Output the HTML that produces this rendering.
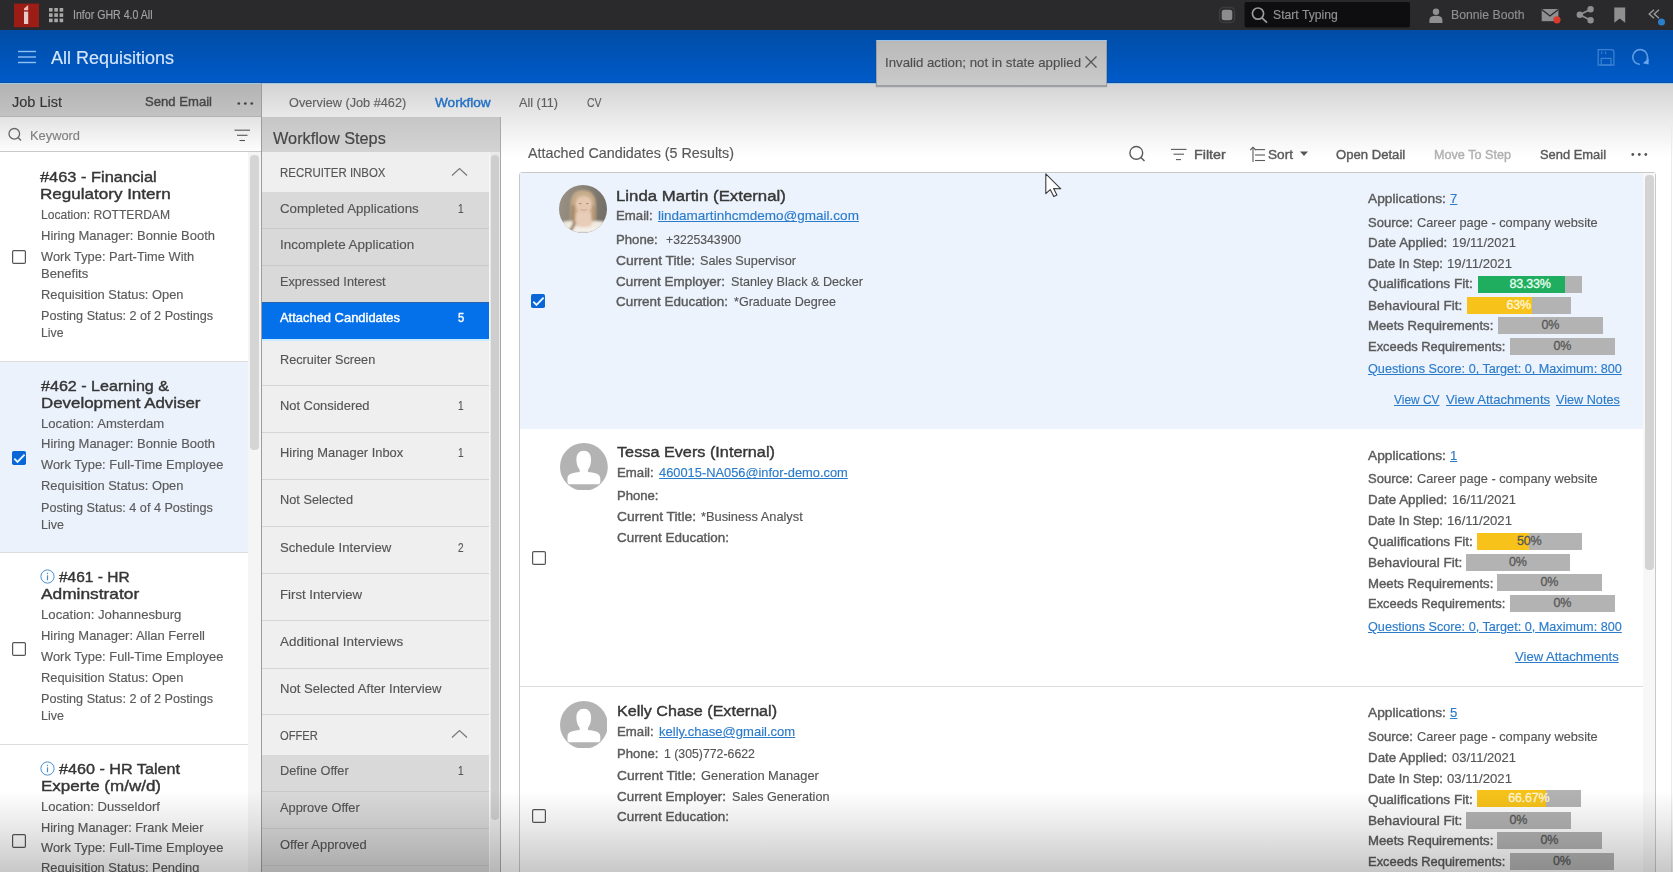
<!DOCTYPE html><html><head><meta charset="utf-8"><style>
html,body{margin:0;padding:0;width:1673px;height:872px;overflow:hidden;background:#fff}
body{position:relative;font-family:"Liberation Sans",sans-serif}
.t{position:absolute;white-space:nowrap;transform-origin:0 0}
</style></head><body>
<div style="position:absolute;left:0px;top:0px;width:1673px;height:30px;background:#2a2a2c"></div>
<div style="position:absolute;left:0px;top:30px;width:1673px;height:53px;background:linear-gradient(#004ca6,#005bc9)"></div>
<div style="position:absolute;left:0px;top:81.6px;width:1673px;height:1px;background:#0b4f9e"></div>
<div style="position:absolute;left:0px;top:82.6px;width:1673px;height:1.4px;background:#9fc8ee"></div>
<div style="position:absolute;left:0px;top:84px;width:261px;height:33px;background:linear-gradient(#b3b3b3,#c3c3c3)"></div>
<div style="position:absolute;left:0px;top:115.6px;width:261px;height:1.8px;background:#b2b2b2"></div>
<div style="position:absolute;left:0px;top:117px;width:261px;height:35px;background:linear-gradient(#e2e2e2,#fefefe)"></div>
<div style="position:absolute;left:0px;top:151px;width:261px;height:1px;background:#c9c9c9"></div>
<div style="position:absolute;left:0px;top:152px;width:248px;height:720px;background:#fff"></div>
<div style="position:absolute;left:248px;top:152px;width:13px;height:720px;background:#f5f5f5"></div>
<div style="position:absolute;left:250px;top:155px;width:9px;height:295px;background:#d5d5d5;border-radius:4px"></div>
<div style="position:absolute;left:260.8px;top:83px;width:1.2px;height:789px;background:#9c9c9c"></div>
<div style="position:absolute;left:262px;top:84px;width:1411px;height:33px;background:linear-gradient(#d3d3d3,#e9e9e9)"></div>
<div style="position:absolute;left:262px;top:116.6px;width:1411px;height:1.2px;background:#bdbdbd"></div>
<div style="position:absolute;left:262px;top:117px;width:238px;height:35px;background:linear-gradient(#c6c6c6,#d3d3d3)"></div>
<div style="position:absolute;left:262px;top:152px;width:228px;height:720px;background:#efefef"></div>
<div style="position:absolute;left:490px;top:152px;width:10px;height:720px;background:#e9e9e9"></div>
<div style="position:absolute;left:491px;top:155px;width:8px;height:665px;background:#cecece;border-radius:4px"></div>
<div style="position:absolute;left:500px;top:117px;width:1px;height:755px;background:#a9a9a9"></div>
<div style="position:absolute;left:501px;top:117px;width:1172px;height:755px;background:linear-gradient(#e9e9e9 0px,#ffffff 40px)"></div>
<svg style="position:absolute;left:0;top:0" width="1673" height="30">
<rect x="14" y="3.6" width="25" height="23.6" fill="#9c1c16"/>
<path d="M24 10.2 L24 8.6 L28.2 5 L28.2 10.2 Z" fill="#e9bdb6"/>
<rect x="24" y="11.6" width="4.2" height="12.4" fill="#e8cac6"/>
<g fill="#a9a9a9">
<rect x="49" y="8" width="3.6" height="3.6"/><rect x="54.3" y="8" width="3.6" height="3.6"/><rect x="59.6" y="8" width="3.6" height="3.6"/>
<rect x="49" y="13.3" width="3.6" height="3.6"/><rect x="54.3" y="13.3" width="3.6" height="3.6"/><rect x="59.6" y="13.3" width="3.6" height="3.6"/>
<rect x="49" y="18.6" width="3.6" height="3.6"/><rect x="54.3" y="18.6" width="3.6" height="3.6"/><rect x="59.6" y="18.6" width="3.6" height="3.6"/>
</g>
<rect x="1219.5" y="7.5" width="15" height="15" rx="4" fill="none" stroke="#3c3c3e" stroke-width="1.5"/>
<rect x="1221.7" y="9.7" width="10.6" height="10.6" rx="2.5" fill="#8c8c8c"/>
<rect x="1244.5" y="2" width="165.5" height="25.5" rx="2" fill="#0e0e10"/>
<circle cx="1258" cy="13.6" r="5.6" fill="none" stroke="#9a9a9a" stroke-width="1.7"/>
<line x1="1262" y1="17.8" x2="1267" y2="22.6" stroke="#9a9a9a" stroke-width="1.8"/>
<circle cx="1436" cy="11.8" r="3.2" fill="#8f8f8f"/>
<path d="M1429.4 23 L1429.4 20 Q1429.4 15.8 1436 15.8 Q1442.4 15.8 1442.4 20 L1442.4 23 Z" fill="#8f8f8f"/>
<rect x="1541.7" y="9" width="16.7" height="12.2" fill="#8f8f8f"/>
<path d="M1541.7 9.5 L1550 16 L1558.4 9.5" fill="none" stroke="#2a2a2c" stroke-width="1.3"/>
<circle cx="1557" cy="19.8" r="3.6" fill="#d83a2e"/>
<g fill="#8f8f8f" stroke="#8f8f8f" stroke-width="1.6">
<circle cx="1579.8" cy="14.8" r="2.4"/><circle cx="1590.6" cy="9.3" r="2.4"/><circle cx="1590.6" cy="20.3" r="2.4"/>
<line x1="1579.8" y1="14.8" x2="1590.6" y2="9.3"/><line x1="1579.8" y1="14.8" x2="1590.6" y2="20.3"/>
</g>
<path d="M1614.3 7.6 H1625.2 V22.7 L1619.75 18.6 L1614.3 22.7 Z" fill="#8f8f8f"/>
<path d="M1654 9.8 L1649.2 14 L1654 18.2 M1659 9.8 L1654.2 14 L1659 18.2" fill="none" stroke="#9a9a9a" stroke-width="1.4"/>
<circle cx="1661.5" cy="22" r="3.5" fill="#2a7fc8"/>
</svg>
<div class="t" style="left:72.50px;top:7.54px;font-size:12px;line-height:15px;color:#a3a3a3;-webkit-text-stroke:0.15px #a3a3a3;transform:scaleX(0.8830);">Infor GHR 4.0 All</div>
<div class="t" style="left:1273.30px;top:7.30px;font-size:13px;line-height:16px;color:#929292;-webkit-text-stroke:0.15px #929292;transform:scaleX(0.9373);">Start Typing</div>
<div class="t" style="left:1450.80px;top:7.00px;font-size:13px;line-height:16px;color:#8f8f8f;-webkit-text-stroke:0.15px #8f8f8f;transform:scaleX(0.9415);">Bonnie Booth</div>
<svg style="position:absolute;left:0;top:30" width="1673" height="53">
<g stroke="#8ec0f5" stroke-width="1.4"><line x1="18" y1="21.5" x2="36" y2="21.5"/><line x1="18" y1="27" x2="36" y2="27"/><line x1="18" y1="32.5" x2="36" y2="32.5"/></g>
<path d="M1598.2 19.6 H1611.3 Q1613.9 19.6 1613.9 22.2 V35 H1598.2 Z" fill="none" stroke="#3a80d4" stroke-width="1.3"/>
<rect x="1601.2" y="28.4" width="9.8" height="6.6" fill="none" stroke="#3a80d4" stroke-width="1.2"/>
<line x1="1601.8" y1="21.5" x2="1601.8" y2="24" stroke="#3a80d4" stroke-width="1.1"/><line x1="1605.6" y1="21.5" x2="1605.6" y2="24" stroke="#3a80d4" stroke-width="1.1"/>
<path d="M1639.8 34.4 A7.4 7.4 0 1 1 1647 29.8" fill="none" stroke="#5d9de6" stroke-width="1.6"/>
<path d="M1648.8 28.2 L1648.6 34.4 L1642.8 33.2 Z" fill="#6aa8ee"/>
</svg>
<div class="t" style="left:51.00px;top:47.36px;font-size:18px;line-height:22px;color:#d5e6fb;-webkit-text-stroke:0.15px #d5e6fb;transform:scaleX(0.9995);">All Requisitions</div>
<div style="position:absolute;left:875.5px;top:39.5px;width:231.5px;height:46.5px;background:linear-gradient(#b9b9b9,#cacaca);border:1px solid #9aa0a6;border-top-color:#9cc4ea;box-sizing:border-box;box-shadow:0 1px 1px rgba(0,0,0,.25)"></div>
<div class="t" style="left:885.30px;top:53.72px;font-size:13.5px;line-height:17px;color:#4e4e4e;-webkit-text-stroke:0.15px #4e4e4e;transform:scaleX(0.9818);">Invalid action; not in state applied</div>
<svg style="position:absolute;left:1084px;top:55px" width="14" height="14"><path d="M1.5 1.5 L12.5 12.5 M12.5 1.5 L1.5 12.5" stroke="#555" stroke-width="1.3"/></svg>
<div class="t" style="left:12.00px;top:93.35px;font-size:14px;line-height:18px;color:#353535;-webkit-text-stroke:0.15px #353535;transform:scaleX(1.0363);">Job List</div>
<div class="t" style="left:145.00px;top:94.40px;font-size:13px;line-height:16px;color:#474747;-webkit-text-stroke:0.4px #474747;transform:scaleX(1.0078);">Send Email</div>
<svg style="position:absolute;left:236px;top:100px" width="20" height="8"><circle cx="2.8" cy="3.5" r="1.35" fill="#444"/><circle cx="9.3" cy="3.5" r="1.35" fill="#444"/><circle cx="15.8" cy="3.5" r="1.35" fill="#444"/></svg>
<svg style="position:absolute;left:0;top:117px" width="261" height="35">
<circle cx="14.3" cy="16.8" r="5.3" fill="none" stroke="#666" stroke-width="1.3"/>
<line x1="18.2" y1="20.7" x2="21" y2="23.5" stroke="#666" stroke-width="1.4"/>
<g stroke="#555" stroke-width="1.1"><line x1="234.5" y1="13.2" x2="250" y2="13.2"/><line x1="237" y1="18.3" x2="247.5" y2="18.3"/><line x1="239.5" y1="23.5" x2="245" y2="23.5"/></g>
</svg>
<div class="t" style="left:30.00px;top:127.42px;font-size:13.5px;line-height:17px;color:#808080;-webkit-text-stroke:0.15px #808080;transform:scaleX(0.9519);">Keyword</div>
<div class="t" style="left:288.80px;top:95.10px;font-size:13px;line-height:16px;color:#606060;-webkit-text-stroke:0.15px #606060;transform:scaleX(0.9771);">Overview (Job #462)</div>
<div class="t" style="left:435.00px;top:95.10px;font-size:13px;line-height:16px;color:#2070c4;-webkit-text-stroke:0.4px #2070c4;transform:scaleX(1.0467);">Workflow</div>
<div class="t" style="left:519.00px;top:95.10px;font-size:13px;line-height:16px;color:#606060;-webkit-text-stroke:0.15px #606060;transform:scaleX(0.9698);">All (11)</div>
<div class="t" style="left:587.00px;top:95.10px;font-size:13px;line-height:16px;color:#606060;-webkit-text-stroke:0.15px #606060;transform:scaleX(0.8084);">CV</div>
<div class="t" style="left:273.00px;top:128.76px;font-size:16px;line-height:20px;color:#454545;-webkit-text-stroke:0.15px #454545;transform:scaleX(1.0176);">Workflow Steps</div>
<div style="position:absolute;left:262px;top:152px;width:226.5px;height:40px;background:#efefef"></div>
<div style="position:absolute;left:488.5px;top:152px;width:1.5px;height:40px;background:#f6f6f6"></div>
<div class="t" style="left:280.30px;top:165.27px;font-size:12.5px;line-height:16px;color:#555555;-webkit-text-stroke:0.15px #555555;transform:scaleX(0.9151);">RECRUITER INBOX</div>
<svg style="position:absolute;left:450px;top:166.5px" width="20" height="12"><path d="M2 8.5 L9.5 1.5 L17 8.5" fill="none" stroke="#777" stroke-width="1.2"/></svg>
<div style="position:absolute;left:262px;top:191.7px;width:226.5px;height:36.7px;background:#d9d9d9"></div>
<div style="position:absolute;left:488.5px;top:191.7px;width:1.5px;height:36.7px;background:#f6f6f6"></div>
<div class="t" style="left:280.30px;top:200.50px;font-size:13px;line-height:16px;color:#555555;-webkit-text-stroke:0.15px #555555;transform:scaleX(1.0209);">Completed Applications</div>
<div class="t" style="left:458.00px;top:200.50px;font-size:13px;line-height:16px;color:#555555;-webkit-text-stroke:0.15px #555555;transform:scaleX(0.7745);">1</div>
<div style="position:absolute;left:262px;top:228.4px;width:226.5px;height:36.6px;background:#d9d9d9"></div>
<div style="position:absolute;left:488.5px;top:228.4px;width:1.5px;height:36.6px;background:#f6f6f6"></div>
<div class="t" style="left:280.30px;top:237.10px;font-size:13px;line-height:16px;color:#555555;-webkit-text-stroke:0.15px #555555;transform:scaleX(1.0316);">Incomplete Application</div>
<div style="position:absolute;left:262px;top:265px;width:226.5px;height:37px;background:#d9d9d9"></div>
<div style="position:absolute;left:488.5px;top:265px;width:1.5px;height:37px;background:#f6f6f6"></div>
<div class="t" style="left:280.30px;top:273.90px;font-size:13px;line-height:16px;color:#555555;-webkit-text-stroke:0.15px #555555;transform:scaleX(0.9743);">Expressed Interest</div>
<div style="position:absolute;left:262px;top:302px;width:226.5px;height:36.5px;background:#0470ea"></div>
<div style="position:absolute;left:488.5px;top:302px;width:1.5px;height:36.5px;background:#f6f6f6"></div>
<div class="t" style="left:280.00px;top:310.10px;font-size:13px;line-height:16px;color:#ffffff;-webkit-text-stroke:0.4px #ffffff;transform:scaleX(0.9942);">Attached Candidates</div>
<div class="t" style="left:458.30px;top:310.10px;font-size:13px;line-height:16px;color:#ffffff;-webkit-text-stroke:0.4px #ffffff;transform:scaleX(0.8575);">5</div>
<div style="position:absolute;left:262px;top:338.5px;width:226.5px;height:2px;background:#c8ecfd"></div>
<div style="position:absolute;left:262px;top:302px;width:226.5px;height:1px;background:#2a63b0"></div>
<div style="position:absolute;left:262px;top:340.5px;width:226.5px;height:45px;background:#efefef"></div>
<div style="position:absolute;left:488.5px;top:340.5px;width:1.5px;height:45px;background:#f6f6f6"></div>
<div class="t" style="left:280.30px;top:351.80px;font-size:13px;line-height:16px;color:#555555;-webkit-text-stroke:0.15px #555555;transform:scaleX(0.9760);">Recruiter Screen</div>
<div style="position:absolute;left:262px;top:385.5px;width:226.5px;height:47px;background:#efefef"></div>
<div style="position:absolute;left:488.5px;top:385.5px;width:1.5px;height:47px;background:#f6f6f6"></div>
<div class="t" style="left:280.30px;top:398.30px;font-size:13px;line-height:16px;color:#555555;-webkit-text-stroke:0.15px #555555;transform:scaleX(0.9908);">Not Considered</div>
<div class="t" style="left:458.00px;top:398.30px;font-size:13px;line-height:16px;color:#555555;-webkit-text-stroke:0.15px #555555;transform:scaleX(0.7745);">1</div>
<div style="position:absolute;left:262px;top:432.5px;width:226.5px;height:47px;background:#efefef"></div>
<div style="position:absolute;left:488.5px;top:432.5px;width:1.5px;height:47px;background:#f6f6f6"></div>
<div class="t" style="left:280.30px;top:445.10px;font-size:13px;line-height:16px;color:#555555;-webkit-text-stroke:0.15px #555555;transform:scaleX(0.9912);">Hiring Manager Inbox</div>
<div class="t" style="left:458.00px;top:445.10px;font-size:13px;line-height:16px;color:#555555;-webkit-text-stroke:0.15px #555555;transform:scaleX(0.7745);">1</div>
<div style="position:absolute;left:262px;top:479.5px;width:226.5px;height:47px;background:#efefef"></div>
<div style="position:absolute;left:488.5px;top:479.5px;width:1.5px;height:47px;background:#f6f6f6"></div>
<div class="t" style="left:280.30px;top:492.40px;font-size:13px;line-height:16px;color:#555555;-webkit-text-stroke:0.15px #555555;transform:scaleX(0.9807);">Not Selected</div>
<div style="position:absolute;left:262px;top:526.5px;width:226.5px;height:47.2px;background:#efefef"></div>
<div style="position:absolute;left:488.5px;top:526.5px;width:1.5px;height:47.2px;background:#f6f6f6"></div>
<div class="t" style="left:280.30px;top:539.90px;font-size:13px;line-height:16px;color:#555555;-webkit-text-stroke:0.15px #555555;transform:scaleX(1.0124);">Schedule Interview</div>
<div class="t" style="left:458.00px;top:539.90px;font-size:13px;line-height:16px;color:#555555;-webkit-text-stroke:0.15px #555555;transform:scaleX(0.7745);">2</div>
<div style="position:absolute;left:262px;top:573.7px;width:226.5px;height:47.1px;background:#efefef"></div>
<div style="position:absolute;left:488.5px;top:573.7px;width:1.5px;height:47.1px;background:#f6f6f6"></div>
<div class="t" style="left:280.30px;top:586.60px;font-size:13px;line-height:16px;color:#555555;-webkit-text-stroke:0.15px #555555;transform:scaleX(1.0148);">First Interview</div>
<div style="position:absolute;left:262px;top:620.8px;width:226.5px;height:47.2px;background:#efefef"></div>
<div style="position:absolute;left:488.5px;top:620.8px;width:1.5px;height:47.2px;background:#f6f6f6"></div>
<div class="t" style="left:280.30px;top:633.70px;font-size:13px;line-height:16px;color:#555555;-webkit-text-stroke:0.15px #555555;transform:scaleX(1.0333);">Additional Interviews</div>
<div style="position:absolute;left:262px;top:668px;width:226.5px;height:46.4px;background:#efefef"></div>
<div style="position:absolute;left:488.5px;top:668px;width:1.5px;height:46.4px;background:#f6f6f6"></div>
<div class="t" style="left:280.30px;top:680.60px;font-size:13px;line-height:16px;color:#555555;-webkit-text-stroke:0.15px #555555;transform:scaleX(1.0061);">Not Selected After Interview</div>
<div style="position:absolute;left:262px;top:714.4px;width:226.5px;height:40.6px;background:#efefef"></div>
<div style="position:absolute;left:488.5px;top:714.4px;width:1.5px;height:40.6px;background:#f6f6f6"></div>
<div class="t" style="left:280.30px;top:727.87px;font-size:12.5px;line-height:16px;color:#555555;-webkit-text-stroke:0.15px #555555;transform:scaleX(0.8947);">OFFER</div>
<svg style="position:absolute;left:450px;top:729.1px" width="20" height="12"><path d="M2 8.5 L9.5 1.5 L17 8.5" fill="none" stroke="#777" stroke-width="1.2"/></svg>
<div style="position:absolute;left:262px;top:755px;width:226.5px;height:36.3px;background:#d9d9d9"></div>
<div style="position:absolute;left:488.5px;top:755px;width:1.5px;height:36.3px;background:#f6f6f6"></div>
<div class="t" style="left:280.30px;top:763.30px;font-size:13px;line-height:16px;color:#555555;-webkit-text-stroke:0.15px #555555;transform:scaleX(0.9835);">Define Offer</div>
<div class="t" style="left:458.00px;top:763.30px;font-size:13px;line-height:16px;color:#555555;-webkit-text-stroke:0.15px #555555;transform:scaleX(0.7745);">1</div>
<div style="position:absolute;left:262px;top:791.3px;width:226.5px;height:36.7px;background:#d9d9d9"></div>
<div style="position:absolute;left:488.5px;top:791.3px;width:1.5px;height:36.7px;background:#f6f6f6"></div>
<div class="t" style="left:280.30px;top:800.10px;font-size:13px;line-height:16px;color:#555555;-webkit-text-stroke:0.15px #555555;transform:scaleX(0.9877);">Approve Offer</div>
<div style="position:absolute;left:262px;top:828px;width:226.5px;height:37px;background:#d9d9d9"></div>
<div style="position:absolute;left:488.5px;top:828px;width:1.5px;height:37px;background:#f6f6f6"></div>
<div class="t" style="left:280.30px;top:837.10px;font-size:13px;line-height:16px;color:#555555;-webkit-text-stroke:0.15px #555555;transform:scaleX(0.9942);">Offer Approved</div>
<div style="position:absolute;left:262px;top:865px;width:226.5px;height:36px;background:#d9d9d9"></div>
<div style="position:absolute;left:488.5px;top:865px;width:1.5px;height:36px;background:#f6f6f6"></div>
<div class="t" style="left:280.30px;top:874.10px;font-size:13px;line-height:16px;color:#555555;-webkit-text-stroke:0.15px #555555;transform:scaleX(1.0000);"></div>
<div style="position:absolute;left:262px;top:227.99999999999997px;width:226.5px;height:1px;background:#c9c9c9"></div>
<div style="position:absolute;left:262px;top:264.6px;width:226.5px;height:1px;background:#c9c9c9"></div>
<div style="position:absolute;left:262px;top:385.1px;width:226.5px;height:1px;background:#d5d5d5"></div>
<div style="position:absolute;left:262px;top:432.1px;width:226.5px;height:1px;background:#d5d5d5"></div>
<div style="position:absolute;left:262px;top:479.1px;width:226.5px;height:1px;background:#d5d5d5"></div>
<div style="position:absolute;left:262px;top:526.1px;width:226.5px;height:1px;background:#d5d5d5"></div>
<div style="position:absolute;left:262px;top:573.3000000000001px;width:226.5px;height:1px;background:#d5d5d5"></div>
<div style="position:absolute;left:262px;top:620.4000000000001px;width:226.5px;height:1px;background:#d5d5d5"></div>
<div style="position:absolute;left:262px;top:667.6px;width:226.5px;height:1px;background:#d5d5d5"></div>
<div style="position:absolute;left:262px;top:714.0px;width:226.5px;height:1px;background:#d5d5d5"></div>
<div style="position:absolute;left:262px;top:790.9px;width:226.5px;height:1px;background:#c9c9c9"></div>
<div style="position:absolute;left:262px;top:827.6px;width:226.5px;height:1px;background:#c9c9c9"></div>
<div style="position:absolute;left:262px;top:864.6px;width:226.5px;height:1px;background:#c9c9c9"></div>
<div style="position:absolute;left:262px;top:900.6px;width:226.5px;height:1px;background:#c9c9c9"></div>
<div style="position:absolute;left:0px;top:361px;width:248px;height:191px;background:#ebf2fc"></div>
<div style="position:absolute;left:0px;top:361px;width:248px;height:1px;background:#dcdcdc"></div>
<div style="position:absolute;left:0px;top:552px;width:248px;height:1px;background:#dcdcdc"></div>
<div style="position:absolute;left:0px;top:744px;width:248px;height:1px;background:#dcdcdc"></div>
<div class="t" style="left:40.30px;top:166.70px;font-size:15px;line-height:19px;color:#353535;-webkit-text-stroke:0.4px #353535;transform:scaleX(1.0934);">#463 - Financial</div>
<div class="t" style="left:40.30px;top:184.30px;font-size:15px;line-height:19px;color:#353535;-webkit-text-stroke:0.4px #353535;transform:scaleX(1.1359);">Regulatory Intern</div>
<div class="t" style="left:40.50px;top:206.70px;font-size:13px;line-height:16px;color:#5a5a5a;-webkit-text-stroke:0.15px #5a5a5a;transform:scaleX(0.9300);">Location: ROTTERDAM</div>
<div class="t" style="left:40.50px;top:227.60px;font-size:13px;line-height:16px;color:#5a5a5a;-webkit-text-stroke:0.15px #5a5a5a;transform:scaleX(0.9990);">Hiring Manager: Bonnie Booth</div>
<div class="t" style="left:40.50px;top:248.60px;font-size:13px;line-height:16px;color:#5a5a5a;-webkit-text-stroke:0.15px #5a5a5a;transform:scaleX(0.9879);">Work Type: Part-Time With</div>
<div class="t" style="left:40.50px;top:265.50px;font-size:13px;line-height:16px;color:#5a5a5a;-webkit-text-stroke:0.15px #5a5a5a;transform:scaleX(1.0069);">Benefits</div>
<div class="t" style="left:40.50px;top:286.90px;font-size:13px;line-height:16px;color:#5a5a5a;-webkit-text-stroke:0.15px #5a5a5a;transform:scaleX(0.9909);">Requisition Status: Open</div>
<div class="t" style="left:40.50px;top:307.60px;font-size:13px;line-height:16px;color:#5a5a5a;-webkit-text-stroke:0.15px #5a5a5a;transform:scaleX(0.9720);">Posting Status: 2 of 2 Postings</div>
<div class="t" style="left:40.50px;top:324.70px;font-size:13px;line-height:16px;color:#5a5a5a;-webkit-text-stroke:0.15px #5a5a5a;transform:scaleX(0.9434);">Live</div>
<svg style="position:absolute;left:12px;top:250px" width="14" height="14"><rect x="0.6" y="0.6" width="12.8" height="12.8" rx="1.2" fill="#fff" stroke="#555" stroke-width="1.2"/></svg>
<div class="t" style="left:40.60px;top:375.70px;font-size:15px;line-height:19px;color:#353535;-webkit-text-stroke:0.4px #353535;transform:scaleX(1.0733);">#462 - Learning &amp;</div>
<div class="t" style="left:40.60px;top:392.90px;font-size:15px;line-height:19px;color:#353535;-webkit-text-stroke:0.4px #353535;transform:scaleX(1.1246);">Development Adviser</div>
<div class="t" style="left:40.60px;top:415.80px;font-size:13px;line-height:16px;color:#5a5a5a;-webkit-text-stroke:0.15px #5a5a5a;transform:scaleX(1.0088);">Location: Amsterdam</div>
<div class="t" style="left:40.60px;top:436.40px;font-size:13px;line-height:16px;color:#5a5a5a;-webkit-text-stroke:0.15px #5a5a5a;transform:scaleX(0.9996);">Hiring Manager: Bonnie Booth</div>
<div class="t" style="left:40.60px;top:457.10px;font-size:13px;line-height:16px;color:#5a5a5a;-webkit-text-stroke:0.15px #5a5a5a;transform:scaleX(0.9914);">Work Type: Full-Time Employee</div>
<div class="t" style="left:40.60px;top:478.10px;font-size:13px;line-height:16px;color:#5a5a5a;-webkit-text-stroke:0.15px #5a5a5a;transform:scaleX(0.9902);">Requisition Status: Open</div>
<div class="t" style="left:40.60px;top:499.50px;font-size:13px;line-height:16px;color:#5a5a5a;-webkit-text-stroke:0.15px #5a5a5a;transform:scaleX(0.9703);">Posting Status: 4 of 4 Postings</div>
<div class="t" style="left:40.60px;top:516.70px;font-size:13px;line-height:16px;color:#5a5a5a;-webkit-text-stroke:0.15px #5a5a5a;transform:scaleX(0.9602);">Live</div>
<svg style="position:absolute;left:12px;top:450.5px" width="14" height="14"><rect x="0" y="0" width="14" height="14" rx="1.8" fill="#0a66d6"/><path d="M2.3 7.6 L5.5 10.9 L12.6 3.6" fill="none" stroke="#e6f6ff" stroke-width="1.9"/></svg>
<svg style="position:absolute;left:40px;top:569px" width="16" height="16"><circle cx="7.5" cy="7.5" r="6.6" fill="none" stroke="#4a8fd0" stroke-width="1"/><rect x="6.9" y="6.3" width="1.2" height="5" fill="#4a8fd0"/><rect x="6.9" y="3.8" width="1.2" height="1.3" fill="#4a8fd0"/></svg>
<div class="t" style="left:59.00px;top:566.90px;font-size:15px;line-height:19px;color:#353535;-webkit-text-stroke:0.4px #353535;transform:scaleX(1.0327);">#461 - HR</div>
<div class="t" style="left:40.60px;top:584.40px;font-size:15px;line-height:19px;color:#353535;-webkit-text-stroke:0.4px #353535;transform:scaleX(1.1549);">Adminstrator</div>
<div class="t" style="left:40.60px;top:607.40px;font-size:13px;line-height:16px;color:#5a5a5a;-webkit-text-stroke:0.15px #5a5a5a;transform:scaleX(1.0117);">Location: Johannesburg</div>
<div class="t" style="left:40.60px;top:628.10px;font-size:13px;line-height:16px;color:#5a5a5a;-webkit-text-stroke:0.15px #5a5a5a;transform:scaleX(0.9949);">Hiring Manager: Allan Ferrell</div>
<div class="t" style="left:40.60px;top:648.80px;font-size:13px;line-height:16px;color:#5a5a5a;-webkit-text-stroke:0.15px #5a5a5a;transform:scaleX(0.9914);">Work Type: Full-Time Employee</div>
<div class="t" style="left:40.60px;top:669.60px;font-size:13px;line-height:16px;color:#5a5a5a;-webkit-text-stroke:0.15px #5a5a5a;transform:scaleX(0.9902);">Requisition Status: Open</div>
<div class="t" style="left:40.60px;top:690.90px;font-size:13px;line-height:16px;color:#5a5a5a;-webkit-text-stroke:0.15px #5a5a5a;transform:scaleX(0.9715);">Posting Status: 2 of 2 Postings</div>
<div class="t" style="left:40.60px;top:707.90px;font-size:13px;line-height:16px;color:#5a5a5a;-webkit-text-stroke:0.15px #5a5a5a;transform:scaleX(0.9602);">Live</div>
<svg style="position:absolute;left:12px;top:641.5px" width="14" height="14"><rect x="0.6" y="0.6" width="12.8" height="12.8" rx="1.2" fill="#fff" stroke="#555" stroke-width="1.2"/></svg>
<svg style="position:absolute;left:40px;top:761px" width="16" height="16"><circle cx="7.5" cy="7.5" r="6.6" fill="none" stroke="#4a8fd0" stroke-width="1"/><rect x="6.9" y="6.3" width="1.2" height="5" fill="#4a8fd0"/><rect x="6.9" y="3.8" width="1.2" height="1.3" fill="#4a8fd0"/></svg>
<div class="t" style="left:59.00px;top:759.10px;font-size:15px;line-height:19px;color:#353535;-webkit-text-stroke:0.4px #353535;transform:scaleX(1.0776);">#460 - HR Talent</div>
<div class="t" style="left:40.60px;top:775.90px;font-size:15px;line-height:19px;color:#353535;-webkit-text-stroke:0.4px #353535;transform:scaleX(1.1336);">Experte (m/w/d)</div>
<div class="t" style="left:40.60px;top:798.60px;font-size:13px;line-height:16px;color:#5a5a5a;-webkit-text-stroke:0.15px #5a5a5a;transform:scaleX(1.0041);">Location: Dusseldorf</div>
<div class="t" style="left:40.60px;top:819.50px;font-size:13px;line-height:16px;color:#5a5a5a;-webkit-text-stroke:0.15px #5a5a5a;transform:scaleX(0.9816);">Hiring Manager: Frank Meier</div>
<div class="t" style="left:40.60px;top:840.10px;font-size:13px;line-height:16px;color:#5a5a5a;-webkit-text-stroke:0.15px #5a5a5a;transform:scaleX(0.9914);">Work Type: Full-Time Employee</div>
<div class="t" style="left:40.60px;top:860.10px;font-size:13px;line-height:16px;color:#5a5a5a;-webkit-text-stroke:0.15px #5a5a5a;transform:scaleX(0.9918);">Requisition Status: Pending</div>
<svg style="position:absolute;left:12px;top:833.5px" width="14" height="14"><rect x="0.6" y="0.6" width="12.8" height="12.8" rx="1.2" fill="#fff" stroke="#555" stroke-width="1.2"/></svg>
<div class="t" style="left:527.50px;top:144.28px;font-size:14.5px;line-height:18px;color:#585858;-webkit-text-stroke:0.15px #585858;transform:scaleX(0.9868);">Attached Candidates (5 Results)</div>
<svg style="position:absolute;left:1120px;top:140px" width="200" height="28">
<circle cx="16.3" cy="12.9" r="6.4" fill="none" stroke="#5a5a5a" stroke-width="1.4"/>
<line x1="20.9" y1="17.5" x2="24.5" y2="21" stroke="#5a5a5a" stroke-width="1.5"/>
<g stroke="#5a5a5a" stroke-width="1.1"><line x1="51" y1="9.4" x2="66.5" y2="9.4"/><line x1="53.5" y1="14.2" x2="64" y2="14.2"/><line x1="56" y1="19.6" x2="61" y2="19.6"/></g>
<g stroke="#5a5a5a" stroke-width="1.1"><line x1="133" y1="7.2" x2="133" y2="22"/><path d="M130.3 10 L133 7.2 L135.7 10" fill="none"/><line x1="135" y1="9.6" x2="145" y2="9.6"/><line x1="135" y1="15" x2="145" y2="15"/><line x1="135" y1="20.5" x2="145" y2="20.5"/></g>
<path d="M180 11.5 L188 11.5 L184 16 Z" fill="#555"/>
</svg>
<div class="t" style="left:1194.00px;top:146.70px;font-size:13px;line-height:16px;color:#5a5a5a;-webkit-text-stroke:0.4px #5a5a5a;transform:scaleX(1.0973);">Filter</div>
<div class="t" style="left:1267.80px;top:146.70px;font-size:13px;line-height:16px;color:#5a5a5a;-webkit-text-stroke:0.4px #5a5a5a;transform:scaleX(1.0485);">Sort</div>
<div class="t" style="left:1335.60px;top:146.70px;font-size:13px;line-height:16px;color:#5a5a5a;-webkit-text-stroke:0.4px #5a5a5a;transform:scaleX(1.0080);">Open Detail</div>
<div class="t" style="left:1434.00px;top:146.70px;font-size:13px;line-height:16px;color:#b0b0b0;-webkit-text-stroke:0.4px #b0b0b0;transform:scaleX(0.9716);">Move To Step</div>
<div class="t" style="left:1540.00px;top:146.70px;font-size:13px;line-height:16px;color:#5a5a5a;-webkit-text-stroke:0.4px #5a5a5a;transform:scaleX(0.9928);">Send Email</div>
<svg style="position:absolute;left:1630px;top:151px" width="20" height="8"><circle cx="2.8" cy="3.5" r="1.4" fill="#555"/><circle cx="9.3" cy="3.5" r="1.4" fill="#555"/><circle cx="15.8" cy="3.5" r="1.4" fill="#555"/></svg>
<div style="position:absolute;left:519px;top:172px;width:1137px;height:720px;background:#fff;border:1px solid #c9c9c9;border-radius:3px;box-sizing:border-box"></div>
<div style="position:absolute;left:520px;top:173px;width:1123px;height:256px;background:#ecf3fd"></div>
<div style="position:absolute;left:520px;top:685.5px;width:1123px;height:1px;background:#dcdcdc"></div>
<div style="position:absolute;left:1643px;top:173px;width:12px;height:699px;background:#f7f7f7"></div>
<div style="position:absolute;left:1645px;top:175px;width:8.5px;height:395px;background:#d3d3d3;border-radius:4px"></div>
<div style="position:absolute;left:1670.5px;top:117px;width:1.5px;height:755px;background:#ececec"></div>
<svg style="position:absolute;left:559px;top:184.5px" width="48" height="48" viewBox="0 0 48 48">
<defs><clipPath id="lc"><circle cx="24" cy="24" r="24"/></clipPath>
<linearGradient id="lbg" x1="0" y1="0" x2="1" y2="0.2"><stop offset="0" stop-color="#9a9285"/><stop offset="0.5" stop-color="#8a8378"/><stop offset="1" stop-color="#757068"/></linearGradient>
<linearGradient id="lwh" x1="0" y1="0" x2="0" y2="1"><stop offset="0" stop-color="#efe6dc"/><stop offset="1" stop-color="#f6f2ee"/></linearGradient>
<filter id="lbl" x="-20%" y="-20%" width="140%" height="140%"><feGaussianBlur stdDeviation="0.8"/></filter></defs>
<g clip-path="url(#lc)">
<rect width="48" height="48" fill="url(#lbg)"/>
<g filter="url(#lbl)">
<path d="M24 5 C15 5 11.5 11 11.5 20 C11.5 28 10 35 13 42 L35 42 C38 35 37 28 37 20 C37 11 33 5 24 5 Z" fill="#c4a987"/>
<path d="M13 20 C12.5 28 11 34 13.5 41 L16 41 C14.5 34 15.5 27 15.5 20 Z" fill="#a08665"/>
<path d="M33.5 20 C33.5 27 34 34 33 41 L35.5 41 C37.5 34 36.5 27 35.5 20 Z" fill="#ad9372"/>
<path d="M0 39 C7 35 13 35 17 38 L31 38 C35 35 41 35 48 38 L48 48 L0 48 Z" fill="url(#lwh)"/>
<path d="M17.5 27 L31.5 27 L33 40 C30 43 19 43 16 40 Z" fill="#e8cdb9"/>
<ellipse cx="24.8" cy="19.3" rx="8.2" ry="9.8" fill="#e6c8b0"/>
<path d="M16.2 16 C17 9.5 21 8 25 8 C29.5 8 32.8 10 33.4 16.5 C31 12.5 28 11.2 24.6 11.2 C20.6 11.2 18.2 12.8 16.2 16 Z" fill="#c9b08f"/>
<path d="M9 46 C12 42 14 40 14 36 L17 37 C17 41 14 44 12 48 Z" fill="#9e8463"/>
</g>
<ellipse cx="21.2" cy="18.6" rx="1.5" ry="0.7" fill="#8f7062" opacity="0.7"/><ellipse cx="28.3" cy="18.6" rx="1.5" ry="0.7" fill="#8f7062" opacity="0.7"/>
<path d="M21.8 24.6 Q24.8 26 27.8 24.6" fill="none" stroke="#c09080" stroke-width="0.8" opacity="0.8"/>
</g></svg>
<svg style="position:absolute;left:531px;top:293.5px" width="14" height="14"><rect x="0" y="0" width="14" height="14" rx="1.8" fill="#0a66d6"/><path d="M2.3 7.6 L5.5 10.9 L12.6 3.6" fill="none" stroke="#e6f6ff" stroke-width="1.9"/></svg>
<div class="t" style="left:616.00px;top:185.83px;font-size:15.5px;line-height:19px;color:#363636;-webkit-text-stroke:0.4px #363636;transform:scaleX(1.0830);">Linda Martin (External)</div>
<div class="t" style="left:616.00px;top:208.30px;font-size:13px;line-height:16px;color:#5b5b5b;-webkit-text-stroke:0.4px #5b5b5b;transform:scaleX(1.0161);">Email:</div>
<div class="t" style="left:657.70px;top:208.30px;font-size:13px;line-height:16px;color:#2b7bcb;-webkit-text-stroke:0.15px #2b7bcb;transform:scaleX(1.0404);text-decoration:underline;">lindamartinhcmdemo@gmail.com</div>
<div class="t" style="left:616.00px;top:231.70px;font-size:13px;line-height:16px;color:#5b5b5b;-webkit-text-stroke:0.4px #5b5b5b;transform:scaleX(1.0120);">Phone:</div>
<div class="t" style="left:666.00px;top:231.70px;font-size:13px;line-height:16px;color:#555555;-webkit-text-stroke:0.15px #555555;transform:scaleX(0.9387);">+3225343900</div>
<div class="t" style="left:616.00px;top:252.60px;font-size:13px;line-height:16px;color:#5b5b5b;-webkit-text-stroke:0.4px #5b5b5b;transform:scaleX(1.0616);">Current Title:</div>
<div class="t" style="left:700.00px;top:252.60px;font-size:13px;line-height:16px;color:#555555;-webkit-text-stroke:0.15px #555555;transform:scaleX(0.9769);">Sales Supervisor</div>
<div class="t" style="left:616.00px;top:273.50px;font-size:13px;line-height:16px;color:#5b5b5b;-webkit-text-stroke:0.4px #5b5b5b;transform:scaleX(1.0333);">Current Employer:</div>
<div class="t" style="left:730.50px;top:273.50px;font-size:13px;line-height:16px;color:#555555;-webkit-text-stroke:0.15px #555555;transform:scaleX(0.9710);">Stanley Black &amp; Decker</div>
<div class="t" style="left:616.00px;top:294.00px;font-size:13px;line-height:16px;color:#5b5b5b;-webkit-text-stroke:0.4px #5b5b5b;transform:scaleX(1.0333);">Current Education:</div>
<div class="t" style="left:734.00px;top:294.00px;font-size:13px;line-height:16px;color:#555555;-webkit-text-stroke:0.15px #555555;transform:scaleX(0.9667);">*Graduate Degree</div>
<div class="t" style="left:1367.70px;top:190.90px;font-size:13px;line-height:16px;color:#5b5b5b;-webkit-text-stroke:0.4px #5b5b5b;transform:scaleX(1.0555);">Applications:</div>
<div class="t" style="left:1450.00px;top:190.90px;font-size:13px;line-height:16px;color:#2b7bcb;-webkit-text-stroke:0.15px #2b7bcb;transform:scaleX(1.0096);text-decoration:underline;">7</div>
<div class="t" style="left:1367.70px;top:214.70px;font-size:13px;line-height:16px;color:#5b5b5b;-webkit-text-stroke:0.4px #5b5b5b;transform:scaleX(0.9999);">Source:</div>
<div class="t" style="left:1417.30px;top:214.70px;font-size:13px;line-height:16px;color:#555555;-webkit-text-stroke:0.15px #555555;transform:scaleX(0.9807);">Career page - company website</div>
<div class="t" style="left:1367.70px;top:235.20px;font-size:13px;line-height:16px;color:#5b5b5b;-webkit-text-stroke:0.4px #5b5b5b;transform:scaleX(1.0254);">Date Applied:</div>
<div class="t" style="left:1452.00px;top:235.20px;font-size:13px;line-height:16px;color:#555555;-webkit-text-stroke:0.15px #555555;transform:scaleX(0.9984);">19/11/2021</div>
<div class="t" style="left:1367.70px;top:256.20px;font-size:13px;line-height:16px;color:#5b5b5b;-webkit-text-stroke:0.4px #5b5b5b;transform:scaleX(0.9871);">Date In Step:</div>
<div class="t" style="left:1447.00px;top:256.20px;font-size:13px;line-height:16px;color:#555555;-webkit-text-stroke:0.15px #555555;transform:scaleX(1.0140);">19/11/2021</div>
<div class="t" style="left:1367.70px;top:276.40px;font-size:13px;line-height:16px;color:#5b5b5b;-webkit-text-stroke:0.4px #5b5b5b;transform:scaleX(1.0521);">Qualifications Fit:</div>
<div style="position:absolute;left:1477.8px;top:275.7px;width:104.5px;height:17px;background:#b3b3b3"></div>
<div style="position:absolute;left:1477.8px;top:275.7px;width:87.07985000000001px;height:17px;background:#1fae5f"></div>
<div class="t" style="left:1477.8px;top:275.7px;width:104.5px;height:17px;line-height:17px;text-align:center;font-size:12.5px;color:#e9fff0;letter-spacing:-0.2px;-webkit-text-stroke:0.3px #e9fff0">83.33%</div>
<div class="t" style="left:1367.70px;top:297.80px;font-size:13px;line-height:16px;color:#5b5b5b;-webkit-text-stroke:0.4px #5b5b5b;transform:scaleX(1.0440);">Behavioural Fit:</div>
<div style="position:absolute;left:1466.5px;top:296.5px;width:104.5px;height:17px;background:#b3b3b3"></div>
<div style="position:absolute;left:1466.5px;top:296.5px;width:65.835px;height:17px;background:#f7c31a"></div>
<div class="t" style="left:1466.5px;top:296.5px;width:104.5px;height:17px;line-height:17px;text-align:center;font-size:12.5px;color:#fff6d8;letter-spacing:-0.2px;-webkit-text-stroke:0.3px #fff6d8">63%</div>
<div class="t" style="left:1367.70px;top:318.40px;font-size:13px;line-height:16px;color:#5b5b5b;-webkit-text-stroke:0.4px #5b5b5b;transform:scaleX(1.0141);">Meets Requirements:</div>
<div style="position:absolute;left:1498px;top:317.2px;width:104.5px;height:17px;background:#b3b3b3"></div>
<div class="t" style="left:1498px;top:317.2px;width:104.5px;height:17px;line-height:17px;text-align:center;font-size:12.5px;color:#585858;letter-spacing:-0.2px;-webkit-text-stroke:0.3px #585858">0%</div>
<div class="t" style="left:1367.70px;top:339.40px;font-size:13px;line-height:16px;color:#5b5b5b;-webkit-text-stroke:0.4px #5b5b5b;transform:scaleX(0.9948);">Exceeds Requirements:</div>
<div style="position:absolute;left:1510px;top:338.2px;width:104.5px;height:17px;background:#b3b3b3"></div>
<div class="t" style="left:1510px;top:338.2px;width:104.5px;height:17px;line-height:17px;text-align:center;font-size:12.5px;color:#585858;letter-spacing:-0.2px;-webkit-text-stroke:0.3px #585858">0%</div>
<div class="t" style="left:1367.70px;top:361.20px;font-size:13px;line-height:16px;color:#2b7bcb;-webkit-text-stroke:0.15px #2b7bcb;transform:scaleX(0.9739);text-decoration:underline;">Questions Score: 0, Target: 0, Maximum: 800</div>
<div class="t" style="left:1393.90px;top:391.90px;font-size:13px;line-height:16px;color:#2b7bcb;-webkit-text-stroke:0.15px #2b7bcb;transform:scaleX(0.9171);text-decoration:underline;">View CV</div>
<div class="t" style="left:1445.50px;top:391.90px;font-size:13px;line-height:16px;color:#2b7bcb;-webkit-text-stroke:0.15px #2b7bcb;transform:scaleX(1.0097);text-decoration:underline;">View Attachments</div>
<div class="t" style="left:1556.00px;top:391.90px;font-size:13px;line-height:16px;color:#2b7bcb;-webkit-text-stroke:0.15px #2b7bcb;transform:scaleX(0.9738);text-decoration:underline;">View Notes</div>
<svg style="position:absolute;left:559.85px;top:442.50px" width="47.80" height="47.80" viewBox="0 0 47.8 47.8">
<circle cx="23.9" cy="23.9" r="23.9" fill="#b3b3b3"/>
<path fill="#fff" d="M23.8 7.8 C28.6 7.8 31.1 11.2 31.1 17 C31.1 21.5 29.6 24.5 27.9 27 L27.9 29 C33.5 29.6 40.2 30.6 40.3 35 L40.3 39 C40.3 40.5 39.1 41.3 37.6 41.3 L10.1 41.3 C8.6 41.3 7.5 40.5 7.5 39 L7.5 35 C7.6 30.6 14.3 29.6 19.7 29 L19.7 27 C18 24.5 16.4 21.5 16.4 17 C16.4 11.2 19 7.8 23.8 7.8 Z"/>
</svg>
<svg style="position:absolute;left:532px;top:550.5px" width="14" height="14"><rect x="0.6" y="0.6" width="12.8" height="12.8" rx="1.2" fill="#fff" stroke="#555" stroke-width="1.2"/></svg>
<div class="t" style="left:617.00px;top:442.43px;font-size:15.5px;line-height:19px;color:#363636;-webkit-text-stroke:0.4px #363636;transform:scaleX(1.0474);">Tessa Evers (Internal)</div>
<div class="t" style="left:616.50px;top:465.30px;font-size:13px;line-height:16px;color:#5b5b5b;-webkit-text-stroke:0.4px #5b5b5b;transform:scaleX(1.0161);">Email:</div>
<div class="t" style="left:658.60px;top:465.30px;font-size:13px;line-height:16px;color:#2b7bcb;-webkit-text-stroke:0.15px #2b7bcb;transform:scaleX(0.9886);text-decoration:underline;">460015-NA056@infor-demo.com</div>
<div class="t" style="left:616.50px;top:488.40px;font-size:13px;line-height:16px;color:#5b5b5b;-webkit-text-stroke:0.4px #5b5b5b;transform:scaleX(1.0072);">Phone:</div>
<div class="t" style="left:616.50px;top:509.30px;font-size:13px;line-height:16px;color:#5b5b5b;-webkit-text-stroke:0.4px #5b5b5b;transform:scaleX(1.0616);">Current Title:</div>
<div class="t" style="left:701.30px;top:509.30px;font-size:13px;line-height:16px;color:#555555;-webkit-text-stroke:0.15px #555555;transform:scaleX(0.9842);">*Business Analyst</div>
<div class="t" style="left:616.50px;top:530.10px;font-size:13px;line-height:16px;color:#5b5b5b;-webkit-text-stroke:0.4px #5b5b5b;transform:scaleX(1.0333);">Current Education:</div>
<div class="t" style="left:1367.70px;top:447.50px;font-size:13px;line-height:16px;color:#5b5b5b;-webkit-text-stroke:0.4px #5b5b5b;transform:scaleX(1.0555);">Applications:</div>
<div class="t" style="left:1450.00px;top:447.50px;font-size:13px;line-height:16px;color:#2b7bcb;-webkit-text-stroke:0.15px #2b7bcb;transform:scaleX(1.0096);text-decoration:underline;">1</div>
<div class="t" style="left:1367.70px;top:471.40px;font-size:13px;line-height:16px;color:#5b5b5b;-webkit-text-stroke:0.4px #5b5b5b;transform:scaleX(0.9999);">Source:</div>
<div class="t" style="left:1417.30px;top:471.40px;font-size:13px;line-height:16px;color:#555555;-webkit-text-stroke:0.15px #555555;transform:scaleX(0.9807);">Career page - company website</div>
<div class="t" style="left:1367.70px;top:491.90px;font-size:13px;line-height:16px;color:#5b5b5b;-webkit-text-stroke:0.4px #5b5b5b;transform:scaleX(1.0254);">Date Applied:</div>
<div class="t" style="left:1452.00px;top:491.90px;font-size:13px;line-height:16px;color:#555555;-webkit-text-stroke:0.15px #555555;transform:scaleX(0.9984);">16/11/2021</div>
<div class="t" style="left:1367.70px;top:512.80px;font-size:13px;line-height:16px;color:#5b5b5b;-webkit-text-stroke:0.4px #5b5b5b;transform:scaleX(0.9871);">Date In Step:</div>
<div class="t" style="left:1447.00px;top:512.80px;font-size:13px;line-height:16px;color:#555555;-webkit-text-stroke:0.15px #555555;transform:scaleX(1.0140);">16/11/2021</div>
<div class="t" style="left:1367.70px;top:533.80px;font-size:13px;line-height:16px;color:#5b5b5b;-webkit-text-stroke:0.4px #5b5b5b;transform:scaleX(1.0521);">Qualifications Fit:</div>
<div style="position:absolute;left:1477px;top:532.8px;width:104.5px;height:17px;background:#b3b3b3"></div>
<div style="position:absolute;left:1477px;top:532.8px;width:52.25px;height:17px;background:#f7c31a"></div>
<div class="t" style="left:1477px;top:532.8px;width:104.5px;height:17px;line-height:17px;text-align:center;font-size:12.5px;color:#555555;letter-spacing:-0.2px;-webkit-text-stroke:0.3px #555555">50%</div>
<div class="t" style="left:1367.70px;top:554.70px;font-size:13px;line-height:16px;color:#5b5b5b;-webkit-text-stroke:0.4px #5b5b5b;transform:scaleX(1.0440);">Behavioural Fit:</div>
<div style="position:absolute;left:1465.7px;top:553.5px;width:104.5px;height:17px;background:#b3b3b3"></div>
<div class="t" style="left:1465.7px;top:553.5px;width:104.5px;height:17px;line-height:17px;text-align:center;font-size:12.5px;color:#585858;letter-spacing:-0.2px;-webkit-text-stroke:0.3px #585858">0%</div>
<div class="t" style="left:1367.70px;top:576.10px;font-size:13px;line-height:16px;color:#5b5b5b;-webkit-text-stroke:0.4px #5b5b5b;transform:scaleX(1.0141);">Meets Requirements:</div>
<div style="position:absolute;left:1497px;top:574.4px;width:104.5px;height:17px;background:#b3b3b3"></div>
<div class="t" style="left:1497px;top:574.4px;width:104.5px;height:17px;line-height:17px;text-align:center;font-size:12.5px;color:#585858;letter-spacing:-0.2px;-webkit-text-stroke:0.3px #585858">0%</div>
<div class="t" style="left:1367.70px;top:596.40px;font-size:13px;line-height:16px;color:#5b5b5b;-webkit-text-stroke:0.4px #5b5b5b;transform:scaleX(0.9948);">Exceeds Requirements:</div>
<div style="position:absolute;left:1510px;top:595.3px;width:104.5px;height:17px;background:#b3b3b3"></div>
<div class="t" style="left:1510px;top:595.3px;width:104.5px;height:17px;line-height:17px;text-align:center;font-size:12.5px;color:#585858;letter-spacing:-0.2px;-webkit-text-stroke:0.3px #585858">0%</div>
<div class="t" style="left:1367.70px;top:619.00px;font-size:13px;line-height:16px;color:#2b7bcb;-webkit-text-stroke:0.15px #2b7bcb;transform:scaleX(0.9739);text-decoration:underline;">Questions Score: 0, Target: 0, Maximum: 800</div>
<div class="t" style="left:1515.30px;top:649.30px;font-size:13px;line-height:16px;color:#2b7bcb;-webkit-text-stroke:0.15px #2b7bcb;transform:scaleX(1.0059);text-decoration:underline;">View Attachments</div>
<svg style="position:absolute;left:559.70px;top:700.50px" width="47.80" height="47.80" viewBox="0 0 47.8 47.8">
<circle cx="23.9" cy="23.9" r="23.9" fill="#b3b3b3"/>
<path fill="#fff" d="M23.8 7.8 C28.6 7.8 31.1 11.2 31.1 17 C31.1 21.5 29.6 24.5 27.9 27 L27.9 29 C33.5 29.6 40.2 30.6 40.3 35 L40.3 39 C40.3 40.5 39.1 41.3 37.6 41.3 L10.1 41.3 C8.6 41.3 7.5 40.5 7.5 39 L7.5 35 C7.6 30.6 14.3 29.6 19.7 29 L19.7 27 C18 24.5 16.4 21.5 16.4 17 C16.4 11.2 19 7.8 23.8 7.8 Z"/>
</svg>
<svg style="position:absolute;left:532px;top:808.5px" width="14" height="14"><rect x="0.6" y="0.6" width="12.8" height="12.8" rx="1.2" fill="#fff" stroke="#555" stroke-width="1.2"/></svg>
<div class="t" style="left:617.00px;top:701.03px;font-size:15.5px;line-height:19px;color:#363636;-webkit-text-stroke:0.4px #363636;transform:scaleX(1.0376);">Kelly Chase (External)</div>
<div class="t" style="left:616.50px;top:724.00px;font-size:13px;line-height:16px;color:#5b5b5b;-webkit-text-stroke:0.4px #5b5b5b;transform:scaleX(1.0161);">Email:</div>
<div class="t" style="left:659.00px;top:724.00px;font-size:13px;line-height:16px;color:#2b7bcb;-webkit-text-stroke:0.15px #2b7bcb;transform:scaleX(1.0031);text-decoration:underline;">kelly.chase@gmail.com</div>
<div class="t" style="left:616.50px;top:746.40px;font-size:13px;line-height:16px;color:#5b5b5b;-webkit-text-stroke:0.4px #5b5b5b;transform:scaleX(1.0072);">Phone:</div>
<div class="t" style="left:663.60px;top:746.40px;font-size:13px;line-height:16px;color:#555555;-webkit-text-stroke:0.15px #555555;transform:scaleX(0.9456);">1 (305)772-6622</div>
<div class="t" style="left:616.50px;top:767.50px;font-size:13px;line-height:16px;color:#5b5b5b;-webkit-text-stroke:0.4px #5b5b5b;transform:scaleX(1.0616);">Current Title:</div>
<div class="t" style="left:700.60px;top:767.50px;font-size:13px;line-height:16px;color:#555555;-webkit-text-stroke:0.15px #555555;transform:scaleX(0.9879);">Generation Manager</div>
<div class="t" style="left:616.50px;top:788.50px;font-size:13px;line-height:16px;color:#5b5b5b;-webkit-text-stroke:0.4px #5b5b5b;transform:scaleX(1.0333);">Current Employer:</div>
<div class="t" style="left:731.60px;top:788.50px;font-size:13px;line-height:16px;color:#555555;-webkit-text-stroke:0.15px #555555;transform:scaleX(0.9696);">Sales Generation</div>
<div class="t" style="left:616.50px;top:809.10px;font-size:13px;line-height:16px;color:#5b5b5b;-webkit-text-stroke:0.4px #5b5b5b;transform:scaleX(1.0333);">Current Education:</div>
<div class="t" style="left:1367.70px;top:705.40px;font-size:13px;line-height:16px;color:#5b5b5b;-webkit-text-stroke:0.4px #5b5b5b;transform:scaleX(1.0555);">Applications:</div>
<div class="t" style="left:1450.00px;top:705.40px;font-size:13px;line-height:16px;color:#2b7bcb;-webkit-text-stroke:0.15px #2b7bcb;transform:scaleX(1.0096);text-decoration:underline;">5</div>
<div class="t" style="left:1367.70px;top:728.80px;font-size:13px;line-height:16px;color:#5b5b5b;-webkit-text-stroke:0.4px #5b5b5b;transform:scaleX(0.9999);">Source:</div>
<div class="t" style="left:1417.30px;top:728.80px;font-size:13px;line-height:16px;color:#555555;-webkit-text-stroke:0.15px #555555;transform:scaleX(0.9807);">Career page - company website</div>
<div class="t" style="left:1367.70px;top:750.10px;font-size:13px;line-height:16px;color:#5b5b5b;-webkit-text-stroke:0.4px #5b5b5b;transform:scaleX(1.0254);">Date Applied:</div>
<div class="t" style="left:1452.00px;top:750.10px;font-size:13px;line-height:16px;color:#555555;-webkit-text-stroke:0.15px #555555;transform:scaleX(0.9984);">03/11/2021</div>
<div class="t" style="left:1367.70px;top:770.80px;font-size:13px;line-height:16px;color:#5b5b5b;-webkit-text-stroke:0.4px #5b5b5b;transform:scaleX(0.9871);">Date In Step:</div>
<div class="t" style="left:1447.00px;top:770.80px;font-size:13px;line-height:16px;color:#555555;-webkit-text-stroke:0.15px #555555;transform:scaleX(1.0140);">03/11/2021</div>
<div class="t" style="left:1367.70px;top:791.70px;font-size:13px;line-height:16px;color:#5b5b5b;-webkit-text-stroke:0.4px #5b5b5b;transform:scaleX(1.0521);">Qualifications Fit:</div>
<div style="position:absolute;left:1476.7px;top:790.4px;width:104.5px;height:17px;background:#b3b3b3"></div>
<div style="position:absolute;left:1476.7px;top:790.4px;width:69.67015px;height:17px;background:#f7c31a"></div>
<div class="t" style="left:1476.7px;top:790.4px;width:104.5px;height:17px;line-height:17px;text-align:center;font-size:12.5px;color:#fff6d8;letter-spacing:-0.2px;-webkit-text-stroke:0.3px #fff6d8">66.67%</div>
<div class="t" style="left:1367.70px;top:812.60px;font-size:13px;line-height:16px;color:#5b5b5b;-webkit-text-stroke:0.4px #5b5b5b;transform:scaleX(1.0440);">Behavioural Fit:</div>
<div style="position:absolute;left:1466px;top:811.7px;width:104.5px;height:17px;background:#b3b3b3"></div>
<div class="t" style="left:1466px;top:811.7px;width:104.5px;height:17px;line-height:17px;text-align:center;font-size:12.5px;color:#585858;letter-spacing:-0.2px;-webkit-text-stroke:0.3px #585858">0%</div>
<div class="t" style="left:1367.70px;top:833.30px;font-size:13px;line-height:16px;color:#5b5b5b;-webkit-text-stroke:0.4px #5b5b5b;transform:scaleX(1.0141);">Meets Requirements:</div>
<div style="position:absolute;left:1497px;top:832.3px;width:104.5px;height:17px;background:#b3b3b3"></div>
<div class="t" style="left:1497px;top:832.3px;width:104.5px;height:17px;line-height:17px;text-align:center;font-size:12.5px;color:#585858;letter-spacing:-0.2px;-webkit-text-stroke:0.3px #585858">0%</div>
<div class="t" style="left:1367.70px;top:854.10px;font-size:13px;line-height:16px;color:#5b5b5b;-webkit-text-stroke:0.4px #5b5b5b;transform:scaleX(0.9948);">Exceeds Requirements:</div>
<div style="position:absolute;left:1509.6px;top:853.3px;width:104.5px;height:17px;background:#b3b3b3"></div>
<div class="t" style="left:1509.6px;top:853.3px;width:104.5px;height:17px;line-height:17px;text-align:center;font-size:12.5px;color:#585858;letter-spacing:-0.2px;-webkit-text-stroke:0.3px #585858">0%</div>
<div class="t" style="left:1367.70px;top:876.10px;font-size:13px;line-height:16px;color:#2b7bcb;-webkit-text-stroke:0.15px #2b7bcb;transform:scaleX(0.9739);text-decoration:underline;">Questions Score: 0, Target: 0, Maximum: 800</div>
<svg style="position:absolute;left:1044px;top:172px" width="20" height="28">
<path d="M1.8 1.8 L1.8 21.6 L6.2 17.6 L9.8 24.6 L12.9 23.1 L9.6 16.6 L16.8 16.8 Z" fill="#fff" stroke="#3a3a3a" stroke-width="1.1" stroke-linejoin="round"/>
</svg>
<div style="position:absolute;left:0px;top:790px;width:1673px;height:82px;background:linear-gradient(rgba(0,0,0,0),rgba(0,0,0,0.085) 45%,rgba(0,0,0,0.215));pointer-events:none"></div>
</body></html>
